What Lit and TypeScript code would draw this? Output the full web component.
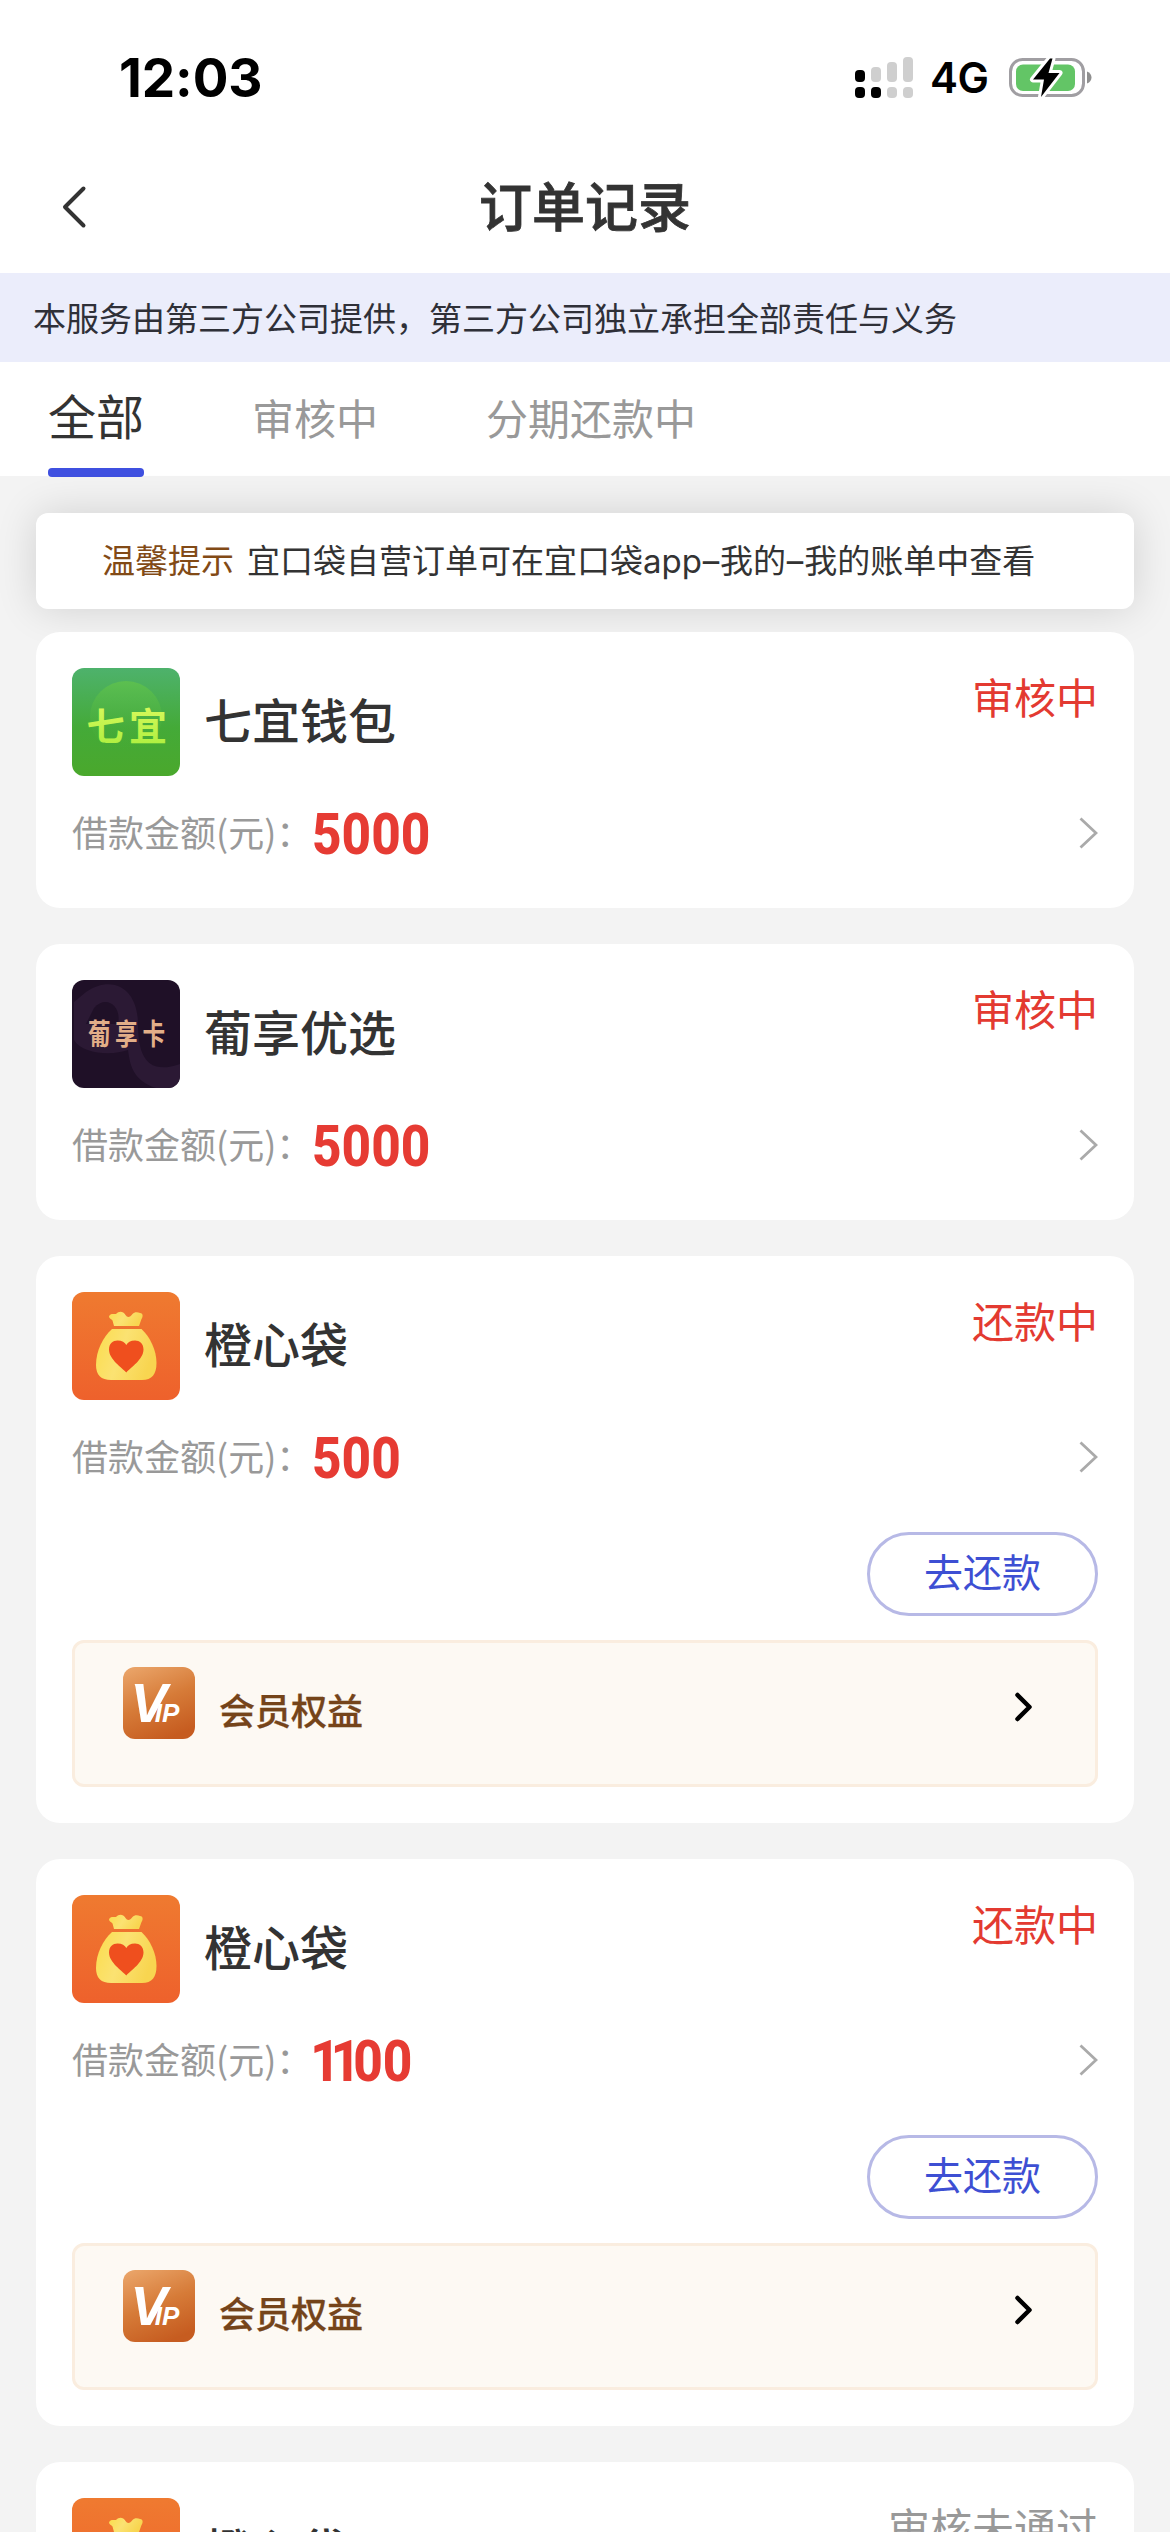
import { LitElement, html, css, svg } from "lit";
import { customElement, property } from "lit/decorators.js";

type Brand = "qiyi" | "puxiang" | "orange";

interface Order {
  brand: Brand;
  name: string;
  status: string;
  muted?: boolean;
  amount: string;
  repay?: boolean;
}

const ORDERS: Order[] = [
  { brand: "qiyi", name: "七宜钱包", status: "审核中", amount: "5000" },
  { brand: "puxiang", name: "葡享优选", status: "审核中", amount: "5000" },
  { brand: "orange", name: "橙心袋", status: "还款中", amount: "500", repay: true },
  { brand: "orange", name: "橙心袋", status: "还款中", amount: "1100", repay: true },
  { brand: "orange", name: "橙心袋", status: "审核未通过", muted: true, amount: "500" },
];

@customElement("status-bar")
class StatusBar extends LitElement {
  static styles = css`
    :host {
      display: flex;
      align-items: flex-start;
      justify-content: space-between;
      height: 141px;
      padding: 0 78px 0 119px;
      box-sizing: border-box;
      font-family: Inter, "Noto Sans CJK SC", sans-serif;
      color: #000;
    }
    .time {
      margin-top: 46px;
      font-size: 53px;
      line-height: 64px;
      font-weight: 700;
      letter-spacing: -0.1px;
    }
    .right {
      display: flex;
      margin-top: 54px;
      height: 48px;
      align-items: center;
    }
    .net {
      margin-left: 17px;
      width: 78px;
      font-size: 42px;
      line-height: 50px;
      font-weight: 600;
      letter-spacing: -0.5px;
    }
    svg {
      display: block;
    }
  `;
  render() {
    return html`
      <div class="time">12:03</div>
      <div class="right">
        <svg width="60" height="48" viewBox="854 54 60 48">
          <g fill="#000">
            <rect x="856" y="70" width="10" height="12" rx="4" />
            <rect x="856" y="87" width="10" height="11" rx="4" />
            <rect x="872" y="87" width="10" height="11" rx="4" />
          </g>
          <g fill="#cfcfcf">
            <rect x="872" y="67" width="10" height="15" rx="4" />
            <rect x="888" y="62" width="10" height="20" rx="4" />
            <rect x="904" y="57" width="10" height="25" rx="4" />
            <rect x="888" y="87" width="10" height="11" rx="4" />
            <rect x="904" y="87" width="10" height="11" rx="4" />
          </g>
        </svg>
        <span class="net">4G</span>
        <svg width="84" height="48" viewBox="1008 54 84 48">
          <rect x="1010.5" y="59.5" width="73" height="36" rx="12" fill="#fff" stroke="#a09ea2" stroke-width="3" />
          <path d="M1087 71.5c3 1.200 4.500 3.400 4.500 6s-1.500 4.800-4.500 6z" fill="#8f8f8f" />
          <rect x="1016" y="64.500" width="59" height="26.500" rx="7" fill="#63c566" />
          <path
            d="M1050 58.500 L1033 79.500 H1044 L1041 97 L1059.500 73 H1048.500 L1052.500 58.500 Z"
            fill="#000"
            stroke="#fff"
            stroke-width="6"
            stroke-linejoin="round"
            paint-order="stroke"
          />
        </svg>
      </div>
    `;
  }
}

@customElement("brand-icon")
class BrandIcon extends LitElement {
  @property() brand: Brand = "orange";

  static styles = css`
    :host {
      display: block;
      width: 108px;
      height: 108px;
      border-radius: 12px;
      overflow: hidden;
    }
    svg {
      display: block;
    }
    .word {
      font-family: "Noto Sans CJK SC", sans-serif;
      font-weight: 700;
    }
  `;

  private art() {
    if (this.brand === "qiyi") {
      return svg`
        <defs>
          <linearGradient id="g" x1="0" y1="0" x2="0" y2="1">
            <stop offset="0" stop-color="#4eb26c" />
            <stop offset="0.55" stop-color="#44aa38" />
            <stop offset="1" stop-color="#4aa82c" />
          </linearGradient>
          <linearGradient id="c" x1="0" y1="0" x2="0" y2="1">
            <stop offset="0" stop-color="#5cbf50" />
            <stop offset="1" stop-color="#44aa34" stop-opacity="0" />
          </linearGradient>
          <linearGradient id="t" x1="0" y1="0" x2="0" y2="1">
            <stop offset="0" stop-color="#e2fb62" />
            <stop offset="1" stop-color="#a9ee3c" />
          </linearGradient>
        </defs>
        <rect width="108" height="108" fill="url(#g)" />
        <circle cx="54" cy="49" r="36" fill="url(#c)" />
        <text class="word" x="14.500 57" y="75" font-size="38" transform="translate(0 -3)" fill="url(#t)">七宜</text>`;
    }
    if (this.brand === "puxiang") {
      return svg`
        <rect width="108" height="108" fill="#1f1027" />
        <path d="M14 12 C40 -6 66 8 66 44 C66 74 74 96 108 84 V108 H84 C60 100 58 84 56 70 C40 76 10 74 2 60 V22 Z" fill="#2b1934" />
        <path d="M22 28 C34 14 50 26 46 44 H14 Z" fill="#1f1027" />
        <text class="word" x="20.500 55 90.500" y="65" font-size="29" transform="scale(0.78 1)" fill="#e2ae88">葡享卡</text>`;
    }
    return svg`
      <defs>
        <linearGradient id="g" x1="0" y1="0" x2="0" y2="1">
          <stop offset="0" stop-color="#ef7a30" />
          <stop offset="1" stop-color="#ee612c" />
        </linearGradient>
        <linearGradient id="b" x1="0" y1="0" x2="1" y2="0.300">
          <stop offset="0" stop-color="#fbdc4c" />
          <stop offset="0.500" stop-color="#fbe272" />
          <stop offset="1" stop-color="#f8d550" />
        </linearGradient>
      </defs>
      <rect width="108" height="108" fill="url(#g)" />
      <path d="M37 24.500 C38 21 42 22.500 44 22 C47 19 51 19 53.500 23 C55.500 26 58 25.500 60.500 22 C62.500 19.500 66 20 68 21 C71.500 21.500 71 25 69.500 27 L67 34 H42 L40.500 28.500 C39.500 27 37 26.500 37 24.500 Z" fill="url(#b)" />
      <path d="M40 37 H69.500 C78 45 84.500 58 84.500 71 C84.500 82 80 88 70 88 H39 C29 88 24 83 24 73 C24 59 31 45 40 37 Z" fill="url(#b)" />
      <path d="M54.300 80.500 C50 75.500 37 67.500 37 57.500 C37 51.500 41 48.500 45.500 48.500 C50 48.500 53 50.500 54.300 53 C55.600 50.500 58.500 48.500 63 48.500 C67.500 48.500 71.500 51.500 71.500 57.500 C71.500 67.500 58.500 75.500 54.300 80.500 Z" fill="#ef4f1e" />`;
  }

  render() {
    return html`<svg width="108" height="108" viewBox="0 0 108 108">${this.art()}</svg>`;
  }
}

@customElement("order-card")
class OrderCard extends LitElement {
  @property({ attribute: false }) order!: Order;

  static styles = css`
    :host {
      display: block;
      flex: none;
      box-sizing: border-box;
      padding: 36px;
      border-radius: 24px;
      background: #fff;
      font-family: Inter, "Noto Sans CJK SC", sans-serif;
    }
    .head {
      display: flex;
      height: 108px;
    }
    .name {
      flex: 1;
      margin-left: 24px;
      font-size: 48px;
      line-height: 108px;
      font-weight: 500;
      color: #333;
    }
    .status {
      height: 62px;
      font-size: 42px;
      line-height: 62px;
      color: #e33a31;
    }
    .status.muted {
      color: #999;
    }
    .row {
      display: flex;
      align-items: center;
      height: 76px;
      margin-top: 19px;
    }
    .label {
      width: 240px;
      font-family: "Noto Sans CJK SC", sans-serif;
      font-size: 36px;
      line-height: 72px;
      padding-bottom: 4px;
      white-space: nowrap;
      color: #999;
    }
    .amount {
      flex: 1;
      padding-top: 4px;
      font-family: Roboto, sans-serif;
      font-size: 57px;
      line-height: 72px;
      font-weight: 800;
      color: #e63b33;
      transform: scaleX(0.9);
      transform-origin: left center;
    }
    .one {
      margin: 0 -8px 0 -2px;
    }
    .spacer {
      height: 1px;
    }
    .actions {
      display: flex;
      justify-content: flex-end;
      margin-top: 37px;
    }
    .repay {
      width: 231px;
      height: 84px;
      box-sizing: border-box;
      padding: 0 0 8px;
      border: 3px solid #b7b9e6;
      border-radius: 42px;
      background: #fff;
      font-family: "Noto Sans CJK SC", sans-serif;
      font-size: 39px;
      line-height: 70px;
      text-align: center;
      color: #3d4fd3;
    }
    .vip {
      display: flex;
      align-items: flex-start;
      height: 147px;
      margin-top: 24px;
      padding: 24px 62px 0 48px;
      box-sizing: border-box;
      border: 3px solid #faeddf;
      border-radius: 12px;
      background: #fdf9f3;
    }
    .vip-text {
      flex: 1;
      margin: 9px 0 0 24px;
      font-size: 36px;
      line-height: 72px;
      font-weight: 500;
      color: #75441a;
      -webkit-text-stroke: 0.3px #75441a;
    }
    .vip-arrow {
      margin-top: 24px;
    }
    .mark {
      font-family: "Liberation Sans", sans-serif;
      font-weight: 700;
      font-style: italic;
    }
    svg {
      display: block;
      flex: none;
    }
  `;

  private digits(amount: string) {
    return [...amount].map((d) => (d === "1" ? html`<span class="one">1</span>` : d));
  }

  private extras() {
    return html`
      <div class="actions"><button class="repay">去还款</button></div>
      <div class="vip">
        <svg width="72" height="72" viewBox="0 0 72 72">
          <defs>
            <linearGradient id="v" x1="0.200" y1="0" x2="0.600" y2="1">
              <stop offset="0" stop-color="#e9a266" />
              <stop offset="0.500" stop-color="#d67b38" />
              <stop offset="1" stop-color="#c65c20" />
            </linearGradient>
          </defs>
          <rect width="72" height="72" rx="12" fill="url(#v)" />
          <path d="M11.500 17 H18 V23 H15 Z" fill="#fff" />
          <text class="mark" x="7.500" y="55" font-size="55" fill="#fff">V<tspan dx="-12.500" font-size="26">IP</tspan></text>
        </svg>
        <span class="vip-text">会员权益</span>
        <svg class="vip-arrow" width="20" height="32" viewBox="0 0 20 32">
          <path d="M4.500 4 L16.500 16 L4.500 28" fill="none" stroke="#000" stroke-width="4.500" stroke-linecap="round" stroke-linejoin="round" />
        </svg>
      </div>
    `;
  }

  render() {
    const o = this.order;
    return html`
      <div class="head">
        <brand-icon .brand=${o.brand}></brand-icon>
        <span class="name">${o.name}</span>
        <span class="status ${o.muted ? "muted" : ""}">${o.status}</span>
      </div>
      <div class="row">
        <span class="label">借款金额(元)：</span>
        <span class="amount">${this.digits(o.amount)}</span>
        <svg width="20" height="32" viewBox="0 0 20 32">
          <path d="M2.500 1.500 L18 16 L2.500 30.500" fill="none" stroke="#aaa" stroke-width="2.800" />
        </svg>
      </div>
      ${o.repay ? this.extras() : html`<div class="spacer"></div>`}
    `;
  }
}

@customElement("app-root")
class AppRoot extends LitElement {
  static styles = css`
    :host {
      display: flex;
      flex-direction: column;
      width: 1170px;
      height: 2532px;
      overflow: hidden;
      background: #f3f3f3;
      font-family: Inter, "Noto Sans CJK SC", sans-serif;
      color: #333;
    }
    .top {
      flex: none;
      background: #fff;
    }
    .nav {
      display: grid;
      grid-template-columns: 120px 1fr 120px;
      align-items: center;
      height: 132px;
    }
    .back {
      display: block;
      margin-left: 60px;
    }
    .title {
      padding-top: 2px;
      text-align: center;
      font-size: 53px;
      line-height: 130px;
      font-weight: 500;
      -webkit-text-stroke: 0.8px #333;
    }
    .notice {
      height: 89px;
      padding-left: 33px;
      background: #ebedfb;
      font-family: "Noto Sans CJK SC", sans-serif;
      font-size: 33px;
      line-height: 89px;
      color: #2f3038;
    }
    .tabs {
      display: flex;
      gap: 108px;
      height: 114px;
      padding-left: 48px;
      font-size: 42px;
      line-height: 115px;
      color: #999;
    }
    .active {
      font-size: 48px;
      line-height: 112px;
      color: #333;
    }
    .label {
      height: 106px;
    }
    .underline {
      height: 9px;
      border-radius: 4px;
      background: #3f50e0;
    }
    .list {
      display: flex;
      flex-direction: column;
      padding: 37px 36px 0;
    }
    .tip {
      flex: none;
      height: 96px;
      margin-bottom: 23px;
      padding-left: 66px;
      border-radius: 12px;
      background: #fff;
      box-shadow: 0 0 42px rgba(0, 0, 0, 0.14);
      font-size: 33px;
      line-height: 96px;
      white-space: nowrap;
    }
    .tip-title {
      margin-right: 13px;
      color: #824a16;
    }
    .dash {
      margin: 0 0.8px;
    }
    .orders {
      display: flex;
      flex-direction: column;
      gap: 36px;
    }
  `;

  render() {
    return html`
      <div class="top">
        <status-bar></status-bar>
        <div class="nav">
          <svg class="back" width="28" height="48" viewBox="0 0 28 48">
            <path d="M23.500 5.500 L5 24 L23.500 42.500" fill="none" stroke="#333" stroke-width="4" stroke-linecap="round" stroke-linejoin="round" />
          </svg>
          <div class="title">订单记录</div>
        </div>
        <div class="notice">本服务由第三方公司提供，第三方公司独立承担全部责任与义务</div>
        <div class="tabs">
          <div class="active">
            <div class="label">全部</div>
            <div class="underline"></div>
          </div>
          <div>审核中</div>
          <div>分期还款中</div>
        </div>
      </div>
      <div class="list">
        <div class="tip"><span class="tip-title">温馨提示</span><span>宜口袋自营订单可在宜口袋app<span class="dash">–</span>我的<span class="dash">–</span>我的账单中查看</span></div>
        <div class="orders">${ORDERS.map((o) => html`<order-card .order=${o}></order-card>`)}</div>
      </div>
    `;
  }
}
